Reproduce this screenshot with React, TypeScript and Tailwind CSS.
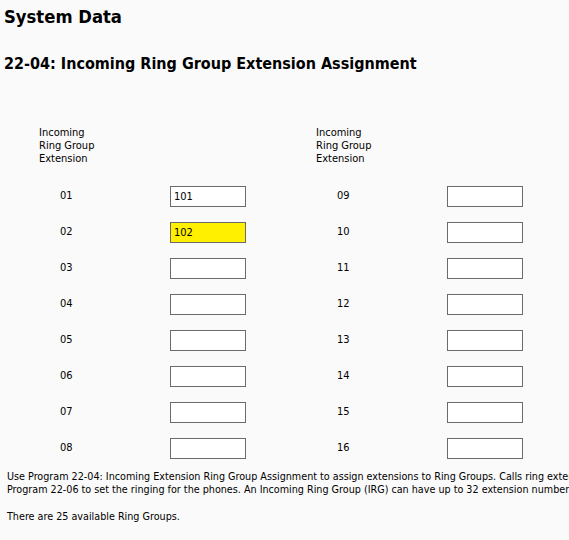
import { useState } from 'react'

const font = { fontFamily: '"DejaVu Sans Condensed", "DejaVu Sans", sans-serif' }

const initial: Record<string, string> = {
  '01': '101',
  '02': '102',
}

function ExtensionColumn({
  groups,
  values,
  onChange,
}: {
  groups: string[]
  values: Record<string, string>
  onChange: (group: string, value: string) => void
}) {
  return (
    <div className="w-[277px] shrink-0">
      <div className="text-[11px] leading-[13px] text-black">
        Incoming
        <br />
        Ring Group
        <br />
        Extension
      </div>
      <div className="mt-[14px] flex flex-col">
        {groups.map((group) => (
          <div key={group} className="flex h-[36px] items-start">
            <span className="mt-[10px] w-[131px] pl-[21px] text-[11px] leading-[13px] text-black">
              {group}
            </span>
            <input
              value={values[group] ?? ''}
              onChange={(e) => onChange(group, e.target.value)}
              className={
                'mt-[7px] h-[21px] w-[76px] border border-[#6b6b6b] px-[3px] text-[11px] text-black outline-none ' +
                (group === '02' ? 'bg-[#fff000]' : 'bg-white')
              }
              style={font}
            />
          </div>
        ))}
      </div>
    </div>
  )
}

export default function App() {
  const [values, setValues] = useState(initial)

  function update(group: string, value: string) {
    setValues((prev) => ({ ...prev, [group]: value }))
  }

  const left = ['01', '02', '03', '04', '05', '06', '07', '08']
  const right = ['09', '10', '11', '12', '13', '14', '15', '16']

  return (
    <div className="h-[540px] w-full overflow-hidden bg-[#fafafa]" style={font}>
      <h1 className="pl-[4px] pt-[6px] text-[18.3px] font-bold leading-[22px] text-black">
        System Data
      </h1>
      <h2 className="mt-[26px] pl-[4px] text-[16px] font-bold leading-[20px] text-black">
        22-04: Incoming Ring Group Extension Assignment
      </h2>

      <div className="mt-[52px] flex pl-[39px]">
        <ExtensionColumn groups={left} values={values} onChange={update} />
        <ExtensionColumn groups={right} values={values} onChange={update} />
      </div>

      <div className="mt-[3px] whitespace-nowrap pl-[7px] text-[10.7px] leading-[13px] text-black">
        <p>
          Use Program 22-04: Incoming Extension Ring Group Assignment to assign extensions to Ring
          Groups. Calls ring extensions in the group simultaneously. Use
          <br />
          Program 22-06 to set the ringing for the phones. An Incoming Ring Group (IRG) can have up
          to 32 extension numbers.
        </p>
        <p className="mt-[14px]">There are 25 available Ring Groups.</p>
      </div>
    </div>
  )
}
